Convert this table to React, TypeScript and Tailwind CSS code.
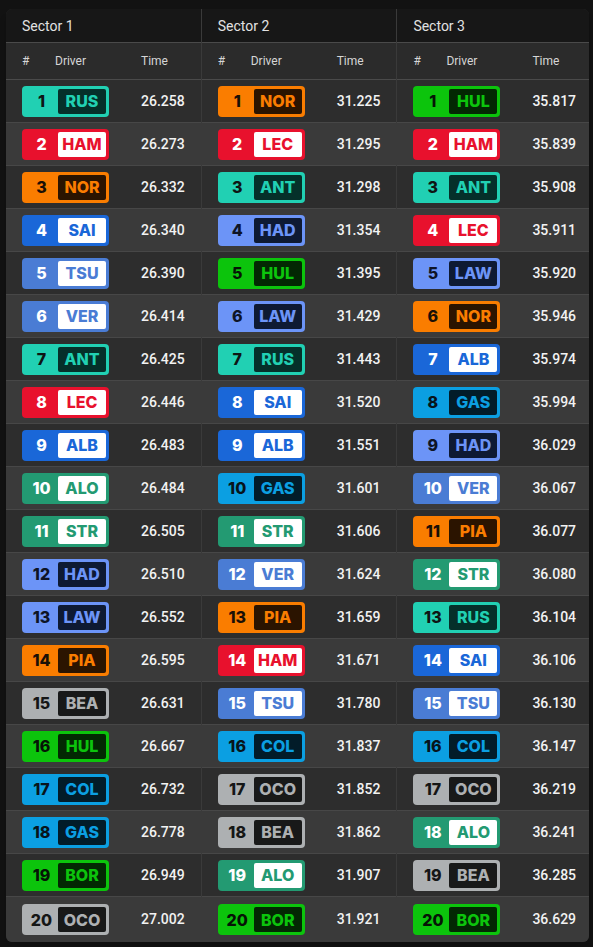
import clsx from "clsx";

type Team = { bg: string; inner: string; code: string; num: string };

const teams: Record<string, Team> = {
  mercedes: { bg: "bg-[#21d0b3]", inner: "bg-[#05302a]", code: "text-[#21d0b3]", num: "text-[#0e1614]" },
  ferrari: { bg: "bg-[#e8112d]", inner: "bg-white", code: "text-[#e8112d]", num: "text-white" },
  mclaren: { bg: "bg-[#fa7d00]", inner: "bg-[#2b1400]", code: "text-[#fa7d00]", num: "text-[#1a1006]" },
  williams: { bg: "bg-[#1a67d8]", inner: "bg-white", code: "text-[#1a67d8]", num: "text-white" },
  redbull: { bg: "bg-[#4a7cd4]", inner: "bg-white", code: "text-[#4a7cd4]", num: "text-white" },
  rb: { bg: "bg-[#6c94f7]", inner: "bg-[#0e1a33]", code: "text-[#6c94f7]", num: "text-[#0e1426]" },
  aston: { bg: "bg-[#239a72]", inner: "bg-white", code: "text-[#239a72]", num: "text-white" },
  haas: { bg: "bg-[#adb0b2]", inner: "bg-[#181919]", code: "text-[#adb0b2]", num: "text-[#151616]" },
  sauber: { bg: "bg-[#0cc40c]", inner: "bg-[#032803]", code: "text-[#0cc40c]", num: "text-[#061406]" },
  alpine: { bg: "bg-[#0b9fe2]", inner: "bg-[#021c29]", code: "text-[#0b9fe2]", num: "text-[#07141b]" },
};

const driverTeam: Record<string, string> = {
  RUS: "mercedes", ANT: "mercedes",
  HAM: "ferrari", LEC: "ferrari",
  NOR: "mclaren", PIA: "mclaren",
  SAI: "williams", ALB: "williams",
  TSU: "redbull", VER: "redbull",
  HAD: "rb", LAW: "rb",
  ALO: "aston", STR: "aston",
  BEA: "haas", OCO: "haas",
  HUL: "sauber", BOR: "sauber",
  GAS: "alpine", COL: "alpine",
};

const parse = (s: string) => s.trim().split(/\s+/).map((p) => p.split(":") as [string, string]);

const sectors = [
  {
    name: "Sector 1",
    rows: parse(
      "RUS:26.258 HAM:26.273 NOR:26.332 SAI:26.340 TSU:26.390 VER:26.414 ANT:26.425 LEC:26.446 ALB:26.483 ALO:26.484 STR:26.505 HAD:26.510 LAW:26.552 PIA:26.595 BEA:26.631 HUL:26.667 COL:26.732 GAS:26.778 BOR:26.949 OCO:27.002"
    ),
  },
  {
    name: "Sector 2",
    rows: parse(
      "NOR:31.225 LEC:31.295 ANT:31.298 HAD:31.354 HUL:31.395 LAW:31.429 RUS:31.443 SAI:31.520 ALB:31.551 GAS:31.601 STR:31.606 VER:31.624 PIA:31.659 HAM:31.671 TSU:31.780 COL:31.837 OCO:31.852 BEA:31.862 ALO:31.907 BOR:31.921"
    ),
  },
  {
    name: "Sector 3",
    rows: parse(
      "HUL:35.817 HAM:35.839 ANT:35.908 LEC:35.911 LAW:35.920 NOR:35.946 ALB:35.974 GAS:35.994 HAD:36.029 VER:36.067 PIA:36.077 STR:36.080 RUS:36.104 SAI:36.106 TSU:36.130 COL:36.147 OCO:36.219 ALO:36.241 BEA:36.285 BOR:36.629"
    ),
  },
];

function Badge({ pos, code }: { pos: number; code: string }) {
  const t = teams[driverTeam[code]];
  return (
    <div className={clsx("flex h-[31px] w-[87px] rounded-[4px] p-[3px] font-['Inter',sans-serif]", t.bg)}>
      <span className={clsx("flex w-[33px] items-center justify-center text-[16px] font-extrabold leading-none", t.num)}>
        {pos}
      </span>
      <span
        className={clsx(
          "flex flex-1 items-center justify-center rounded-[2px] text-[16px] font-extrabold leading-none",
          t.inner,
          t.code
        )}
      >
        {code}
      </span>
    </div>
  );
}

export default function App() {
  return (
    <div className="min-h-screen bg-[#121212] pl-[6px] pt-[9px] font-['Roboto',sans-serif]">
      <div className="flex w-[583px] overflow-hidden rounded-md bg-[#2c2c2c] shadow-lg">
        {sectors.map((s, i) => (
          <div key={s.name} className={clsx("flex flex-1 flex-col", i > 0 && "border-l border-[#3a3a3a]")}>
            <div className="flex h-[34px] items-center border-b border-[#4a4a4a] bg-[#171717] px-4 pt-[2px] text-[14px] text-[#e2e2e2]">
              {s.name}
            </div>
            <div className="grid h-[37px] grid-cols-[33px_86px_1fr] items-center border-b border-[#4a4a4a] bg-[#2b2b2b] px-4 text-[12px] text-[#d6d6d6]">
              <span>#</span>
              <span>Driver</span>
              <span>Time</span>
            </div>
            {s.rows.map(([code, time], r) => (
              <div
                key={code}
                className={clsx(
                  "grid h-[43px] grid-cols-[119px_1fr] items-center px-4",
                  r % 2 === 0 ? "bg-[#2d2d2d]" : "bg-[#3a3a3a]",
                  r < s.rows.length - 1 && "border-b border-[#474747]",
                  r === s.rows.length - 1 && "h-[45px]"
                )}
              >
                <Badge pos={r + 1} code={code} />
                <span className="text-[14px] font-medium text-[#f2f2f2]">{time}</span>
              </div>
            ))}
          </div>
        ))}
      </div>
    </div>
  );
}
